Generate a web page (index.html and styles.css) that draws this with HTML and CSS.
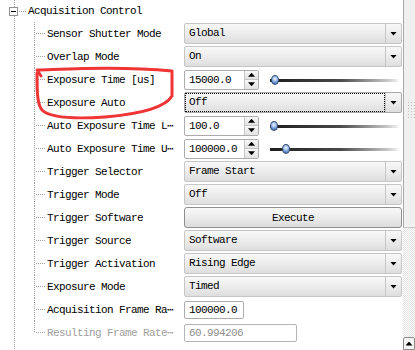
FILE: index.html
```html
<!DOCTYPE html>
<html lang="en">
<head>
    <meta charset="UTF-8">
    <meta name="viewport" content="width=device-width, initial-scale=1.0">
    <title>Acquisition Control</title>
    <link rel="stylesheet" href="styles.css">
</head>
<body>
    <div class="panel">
        <div class="tree">
            <div class="group_head">
                <span class="toggle"></span>
                <span class="branch"></span>
                <span class="group_title">Acquisition Control</span>
            </div>

            <div class="children">
                <div class="row">
                    <span class="guide"></span>
                    <span class="name">Sensor Shutter Mode</span>
                    <div class="combo"><span class="combo_text">Global</span><span class="combo_arrow"></span></div>
                </div>
                <div class="row">
                    <span class="guide"></span>
                    <span class="name">Overlap Mode</span>
                    <div class="combo"><span class="combo_text">On</span><span class="combo_arrow"></span></div>
                </div>
                <div class="row">
                    <span class="guide"></span>
                    <span class="name">Exposure Time [us]</span>
                    <div class="field">
                        <div class="spin"><span class="spin_value">15000.0</span><span class="spin_buttons"><i class="up"></i><i class="down"></i></span></div>
                        <div class="slider"><span class="knob" style="margin-left: 1px"></span></div>
                    </div>
                </div>
                <div class="row">
                    <span class="guide"></span>
                    <span class="name">Exposure Auto</span>
                    <div class="combo focus"><span class="combo_text">Off</span><span class="combo_arrow"></span></div>
                </div>
                <div class="row">
                    <span class="guide"></span>
                    <span class="name" title="Auto Exposure Time Lower Limit">Auto Exposure Time L⋯</span>
                    <div class="field">
                        <div class="spin"><span class="spin_value">100.0</span><span class="spin_buttons"><i class="up"></i><i class="down"></i></span></div>
                        <div class="slider"><span class="knob" style="margin-left: 0px"></span></div>
                    </div>
                </div>
                <div class="row">
                    <span class="guide"></span>
                    <span class="name" title="Auto Exposure Time Upper Limit">Auto Exposure Time U⋯</span>
                    <div class="field">
                        <div class="spin"><span class="spin_value">100000.0</span><span class="spin_buttons"><i class="up"></i><i class="down"></i></span></div>
                        <div class="slider"><span class="knob" style="margin-left: 12px"></span></div>
                    </div>
                </div>
                <div class="row">
                    <span class="guide"></span>
                    <span class="name">Trigger Selector</span>
                    <div class="combo"><span class="combo_text">Frame Start</span><span class="combo_arrow"></span></div>
                </div>
                <div class="row">
                    <span class="guide"></span>
                    <span class="name">Trigger Mode</span>
                    <div class="combo"><span class="combo_text">Off</span><span class="combo_arrow"></span></div>
                </div>
                <div class="row">
                    <span class="guide"></span>
                    <span class="name">Trigger Software</span>
                    <button class="execute" type="button">Execute</button>
                </div>
                <div class="row">
                    <span class="guide"></span>
                    <span class="name">Trigger Source</span>
                    <div class="combo"><span class="combo_text">Software</span><span class="combo_arrow"></span></div>
                </div>
                <div class="row">
                    <span class="guide"></span>
                    <span class="name">Trigger Activation</span>
                    <div class="combo"><span class="combo_text">Rising Edge</span><span class="combo_arrow"></span></div>
                </div>
                <div class="row">
                    <span class="guide"></span>
                    <span class="name">Exposure Mode</span>
                    <div class="combo"><span class="combo_text">Timed</span><span class="combo_arrow"></span></div>
                </div>
                <div class="row">
                    <span class="guide"></span>
                    <span class="name" title="Acquisition Frame Rate">Acquisition Frame Ra⋯</span>
                    <div class="field"><span class="textbox">100000.0</span></div>
                </div>
                <div class="row disabled">
                    <span class="guide"></span>
                    <span class="name" title="Resulting Frame Rate">Resulting Frame Rate⋯</span>
                    <div class="field"><span class="textbox wide">60.994206</span></div>
                </div>
            </div>

            <!-- red marker drawn over the two exposure rows -->
            <svg class="marker" width="403" height="350" viewBox="0 0 403 350">
                <path d="M41,76 L37,70 C70,69 120,66 172,71 L172,96 C165,108 140,114 105,117 C75,119 50,118 42,110 C37,104 37,90 37,73"
                      fill="none" stroke="#ef3535" stroke-width="3" stroke-linecap="round" stroke-linejoin="round"/>
            </svg>
        </div>

        <div class="scrollbar">
            <div class="scroll_thumb"><span class="grip"></span></div>
            <div class="scroll_track"></div>
            <span class="scroll_button"></span>
        </div>
    </div>
</body>
</html>
```

FILE: styles.css
```css
body {
    margin: 0;
    background: #ffffff;
    color: #000000;
    font-family: "Liberation Mono", "DejaVu Sans Mono", monospace;
    font-size: 11px;
    letter-spacing: -0.6px;
}

.panel {
    display: flex;
    width: 415px;
    height: 350px;
    overflow: hidden;
}

/* tree area, the dotted root line sits at x=14 */
.tree {
    position: relative;
    width: 403px;
    background: repeating-linear-gradient(to bottom, #a0a0a0 0 1px, transparent 1px 2px) 14px 0 / 1px 100% no-repeat;
}

.group_head {
    display: flex;
    align-items: center;
    height: 22px;
}

.toggle {
    width: 9px;
    height: 9px;
    margin-left: 9px;
    box-sizing: border-box;
    border: 1px solid #919191;
    background: #ffffff linear-gradient(#000000, #000000) center / 5px 1px no-repeat;
}

.branch {
    width: 8px;
    height: 1px;
    margin-left: 1px;
    background: repeating-linear-gradient(to right, #a0a0a0 0 1px, transparent 1px 2px);
}

.group_title {
    margin-left: 1px;
}

.children {
    margin-left: 34px;
}

.row {
    display: grid;
    grid-template-columns: 13px 137px 218px;
    align-items: center;
    height: 23px;
}

.guide {
    align-self: stretch;
    background:
        repeating-linear-gradient(to bottom, #a0a0a0 0 1px, transparent 1px 2px) 0 0 / 1px 100% no-repeat,
        repeating-linear-gradient(to right, #a0a0a0 0 1px, transparent 1px 2px) 2px 11px / 9px 1px no-repeat;
}

.row:last-child .guide {
    background-size: 1px 12px, 9px 1px;
}

.name {
    white-space: nowrap;
    overflow: hidden;
}

.disabled .name {
    color: #a0a0a0;
}

/* combo box */
.combo {
    display: flex;
    height: 21px;
    box-sizing: border-box;
    border: 1px solid #c6c6c6;
    border-radius: 2px;
    background: linear-gradient(#f8f8f8, #ececec 50%, #dedede);
}

.combo_text {
    flex: 1;
    padding-left: 4px;
    line-height: 19px;
}

.combo_arrow {
    display: flex;
    align-items: center;
    justify-content: center;
    width: 15px;
    border-left: 1px solid #c6c6c6;
}

.combo_arrow::after {
    content: "";
    width: 7px;
    height: 4px;
    background: #000000;
    clip-path: polygon(0 0, 100% 0, 50% 100%);
}

.combo.focus {
    border-color: #a8a8a8;
}

.combo.focus .combo_text {
    outline: 1px dotted #000000;
    outline-offset: -1px;
}

.execute {
    height: 21px;
    padding: 0;
    border: 1px solid #8f8f8f;
    border-radius: 3px;
    background: linear-gradient(#f8f8f8, #ececec 50%, #dcdcdc);
    font: inherit;
    letter-spacing: inherit;
    color: #000000;
}

/* spin box + slider */
.field {
    display: flex;
    align-items: center;
    gap: 11px;
}

.spin {
    display: flex;
    width: 75px;
    height: 20px;
    box-sizing: border-box;
    border: 1px solid #acacac;
    border-radius: 2px;
    background: #ffffff;
}

.spin_value {
    width: 55px;
    padding-left: 4px;
    line-height: 18px;
}

.spin_buttons {
    display: flex;
    flex-direction: column;
    flex: 1;
    border-left: 1px solid #c6c6c6;
}

.spin_buttons i {
    display: flex;
    flex: 1;
    align-items: center;
    justify-content: center;
    background: linear-gradient(#f8f8f8, #e2e2e2);
}

.spin_buttons i + i {
    border-top: 1px solid #c6c6c6;
}

.spin_buttons i::after {
    content: "";
    width: 7px;
    height: 4px;
    background: #000000;
}

.spin_buttons .up::after {
    clip-path: polygon(50% 0, 100% 100%, 0 100%);
}

.spin_buttons .down::after {
    clip-path: polygon(0 0, 100% 0, 50% 100%);
}

.slider {
    display: flex;
    align-items: center;
    width: 128px;
    height: 10px;
    background: linear-gradient(to right, #1e1e1e, #4a4a4a 55%, #c8c8c8 92%, #f0f0f0) 0 4px / 100% 3px no-repeat;
}

.knob {
    width: 8px;
    height: 10px;
    box-sizing: border-box;
    border: 1px solid #3d4f6e;
    border-radius: 50%;
    background: radial-gradient(circle at 50% 35%, #f2f7ff 0, #8db3e6 45%, #24569f 100%);
}

.textbox {
    width: 60px;
    height: 18px;
    box-sizing: border-box;
    padding-left: 4px;
    border: 1px solid #acacac;
    border-radius: 2px;
    line-height: 16px;
}

.textbox.wide {
    width: 113px;
    color: #8f8f8f;
    border-color: #b5b5b5;
}

.marker {
    position: absolute;
    left: 0;
    top: 0;
    pointer-events: none;
}

/* scroll bar */
.scrollbar {
    display: flex;
    flex-direction: column;
    width: 12px;
}

.scroll_thumb {
    height: 228px;
    box-sizing: border-box;
    border-left: 1px solid #a8a8a8;
    border-bottom: 1px solid #c8c8c8;
    background: #f0f0f0;
}

.grip {
    display: block;
    width: 9px;
    height: 18px;
    margin: 100px 0 0 2px;
    background-image:
        linear-gradient(to right, #f0f0f0 2px, transparent 2px),
        linear-gradient(#f0f0f0 2px, #bdbdbd 2px);
    background-size: 3px 3px;
}

.scroll_track {
    flex: 1;
    background: repeating-conic-gradient(#e2e2e2 0 25%, #ffffff 0 50%) 0 0 / 2px 2px;
}

.scroll_button {
    display: flex;
    align-items: center;
    justify-content: center;
    height: 13px;
    box-sizing: border-box;
    border: 1px solid #8a8a8a;
    border-radius: 2px 2px 0 0;
    background: #f4f4f4;
}

.scroll_button::after {
    content: "";
    width: 7px;
    height: 4px;
    background: #000000;
    clip-path: polygon(50% 0, 100% 100%, 0 100%);
}
```
